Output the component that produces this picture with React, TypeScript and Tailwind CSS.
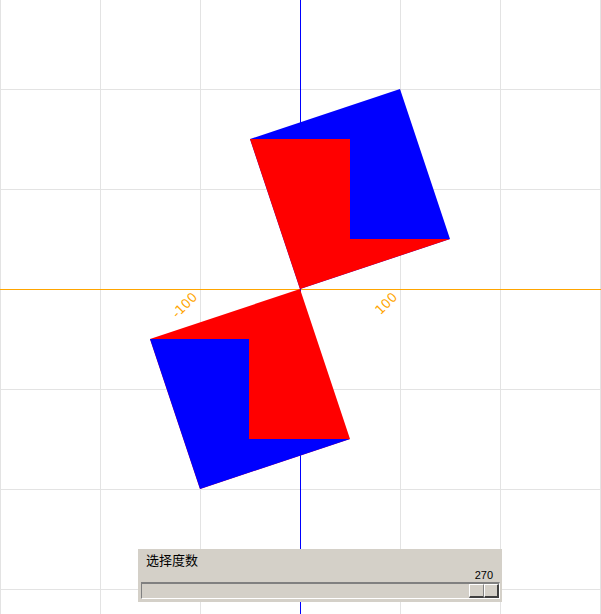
import React from 'react';

const grid = [0, 100, 200, 400, 500, 600];
const rows = [89, 189, 389, 489, 589];

function Chart() {
  return (
    <svg width={601} height={614} className="block">
      <rect width={601} height={614} fill="#ffffff" />
      {grid.map((x) => (
        <line key={'v' + x} x1={x + 0.5} y1={0} x2={x + 0.5} y2={614} stroke="#e3e3e3" strokeWidth={1} />
      ))}
      {rows.map((y) => (
        <line key={'h' + y} x1={0} y1={y + 0.5} x2={601} y2={y + 0.5} stroke="#e3e3e3" strokeWidth={1} />
      ))}
      <line x1={0} y1={289.5} x2={601} y2={289.5} stroke="#ffa500" strokeWidth={1} />
      <line x1={300.5} y1={0} x2={300.5} y2={614} stroke="#0000ff" strokeWidth={1} />

      {/* upper pair */}
      <polygon points="300,289 450,239 400,89 250,139" fill="#0000ff" />
      <polygon points="250,139 350,139 350,239 450,239 300,289" fill="#ff0000" />

      {/* lower pair */}
      <polygon points="300,289 150,339 200,489 350,439" fill="#ff0000" />
      <polygon points="150,339 249,339 249,439 350,439 200,489" fill="#0000ff" />

      <g fill="#ffa500" fontFamily="'DejaVu Sans', sans-serif" fontSize={13}>
        <text x={198} y={298} textAnchor="end" transform="rotate(-45 198 298)">-100</text>
        <text x={398} y={298} textAnchor="end" transform="rotate(-45 398 298)">100</text>
      </g>
    </svg>
  );
}

function DegreeSlider() {
  return (
    <div className="absolute left-[138px] top-[549px] w-[364px] h-[53px] bg-[#d4d0c8] flex flex-col pt-[4px] font-['Liberation_Sans','Noto_Sans_CJK_SC',sans-serif] text-black">
      <div className="pl-[8px] text-[13px] leading-[16px]">选择度数</div>
      <div className="pr-[9px] text-right text-[11px] leading-[13px]">270</div>
      <div className="ml-[3px] mr-[2px] h-[17px] border-t-2 border-l border-t-[#808080] border-l-[#808080] border-b border-r border-b-white border-r-white flex justify-end">
        <div className="flex h-full">
          <div className="w-[15px] h-full bg-[#d4d0c8] border-t border-l border-t-white border-l-white border-b-2 border-b-[#404040] border-r border-r-[#808080]" />
          <div className="w-[15px] h-full bg-[#d4d0c8] border-t border-l border-t-white border-l-white border-b-2 border-r-2 border-b-[#404040] border-r-[#404040]" />
        </div>
      </div>
    </div>
  );
}

export default function App() {
  return (
    <div className="relative w-[601px] h-[614px] overflow-hidden bg-white">
      <Chart />
      <DegreeSlider />
    </div>
  );
}
